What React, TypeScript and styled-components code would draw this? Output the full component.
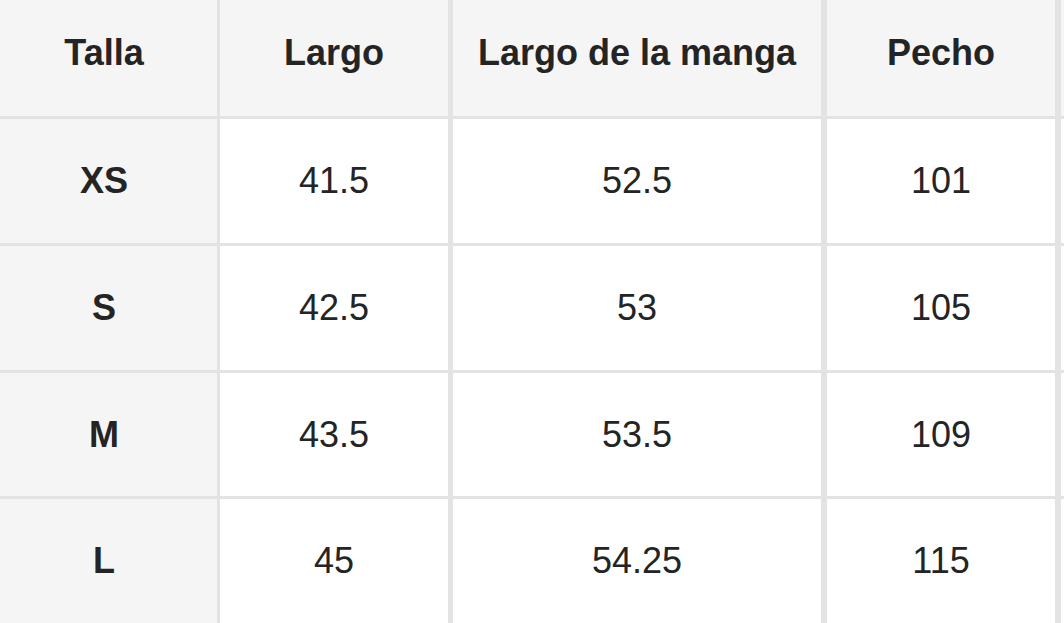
import React from 'react';
import styled, { createGlobalStyle } from 'styled-components';

const GlobalStyle = createGlobalStyle`
  html, body {
    margin: 0;
    padding: 0;
    background: #ffffff;
    overflow: hidden;
  }
  body {
    font-family: "Liberation Sans", Arial, Helvetica, sans-serif;
  }
`;

const Table = styled.div`
  display: grid;
  grid-template-columns: 220px 233px 374px 234px 3px;
  grid-template-rows: 116px 124px 124px 123px 124px;
  row-gap: 3px;
  background-color: #e3e3e3;
  width: 1064px;
`;

// $head: grey label cell, $line: right border width,
// $top / $first: cell is cut by the frame edge, so the text sits off-centre
const Cell = styled.div<{
  $head?: boolean;
  $line?: number;
  $top?: boolean;
  $first?: boolean;
}>`
  display: flex;
  align-items: center;
  justify-content: center;
  box-sizing: border-box;
  min-width: 0;
  overflow: hidden;
  white-space: nowrap;
  padding-bottom: ${(props) => (props.$top ? 10 : 0)}px;
  padding-right: ${(props) => (props.$first ? 9 : 0)}px;
  border-right: ${(props) => props.$line ?? 0}px solid #e3e3e3;
  background-color: ${(props) => (props.$head ? '#f5f5f5' : '#ffffff')};
  color: #242424;
  font-size: 36px;
  font-weight: ${(props) => (props.$head ? 700 : 400)};
  line-height: 1;
`;

const lines = [3, 5, 6, 6, 0];

const headers = ['Talla', 'Largo', 'Largo de la manga', 'Pecho', ''];

const rows = [
  ['XS', '41.5', '52.5', '101'],
  ['S', '42.5', '53', '105'],
  ['M', '43.5', '53.5', '109'],
  ['L', '45', '54.25', '115']
];

const App = () => {
  return (
    <>
      <GlobalStyle />
      <Table>
        {headers.map((title, i) => (
          <Cell key={'h' + i} $head $top $first={i === 0} $line={lines[i]}>
            {title}
          </Cell>
        ))}
        {rows.map((row) => (
          <React.Fragment key={row[0]}>
            {row.map((value, i) => (
              <Cell
                key={value + i}
                $head={i === 0}
                $first={i === 0}
                $line={lines[i]}
              >
                {value}
              </Cell>
            ))}
            <Cell $line={0} />
          </React.Fragment>
        ))}
      </Table>
    </>
  );
};

export default App;
